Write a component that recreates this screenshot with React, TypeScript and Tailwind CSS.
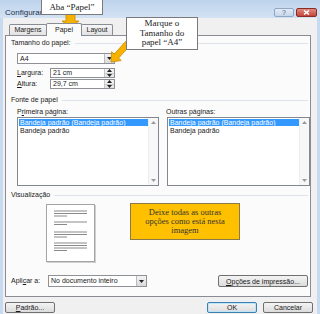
import React from 'react';

const DownCaret = () => (
  <svg width="5" height="3" viewBox="0 0 5 3">
    <polygon points="0,0 5,0 2.5,3" fill="#222" />
  </svg>
);

const UpCaret = ({ color = '#222' }: { color?: string }) => (
  <svg width="5" height="3" viewBox="0 0 5 3">
    <polygon points="0,3 5,3 2.5,0" fill={color} />
  </svg>
);

const GroupTitle = ({ text }: { text: string }) => (
  <div className="flex items-center gap-[4px] h-[8px] pl-[5px] pr-[2px]">
    <span className="leading-[8px] whitespace-nowrap">{text}</span>
    <div className="flex-1 h-px bg-[#dde3e8]" />
  </div>
);

const Select = ({ value, className }: { value: string; className: string }) => (
  <div className={`flex h-[11px] border border-[#8e9297] bg-white ${className}`}>
    <span className="flex-1 pl-[2px] leading-[9px]">{value}</span>
    <div className="w-[10px] flex items-center justify-center border-l border-[#b8bcc2] bg-linear-to-b from-[#f4f4f4] to-[#dadada]">
      <DownCaret />
    </div>
  </div>
);

const Spinner = ({ label, accel, value }: { label: string; accel: string; value: string }) => (
  <div className="flex items-center h-[10px] pl-[11px]">
    <span className="w-[33px] leading-[8px]">
      <span className="underline">{accel}</span>
      {label}
    </span>
    <div className="flex w-[65px] h-[10px] border border-[#8e9297] bg-white">
      <span className="flex-1 pl-[2px] leading-[8px]">{value}</span>
      <div className="w-[10px] flex flex-col border-l border-[#c4c8cc]">
        <div className="flex-1 flex items-center justify-center bg-[#f0f0f0] border-b border-[#c4c8cc]">
          <UpCaret />
        </div>
        <div className="flex-1 flex items-center justify-center bg-[#e6e6e6]">
          <DownCaret />
        </div>
      </div>
    </div>
  </div>
);

const ListBox = ({ className }: { className: string }) => (
  <div className={`flex h-[69px] border border-[#828790] bg-white ${className}`}>
    <div className="flex-1 flex flex-col pt-[1px] pl-[1px]">
      <div className="h-[7px] leading-[7px] pl-[1px] bg-[#3399ff] text-white whitespace-nowrap">
        Bandeja padrão (Bandeja padrão)
      </div>
      <div className="h-[7px] leading-[7px] pl-[1px] mt-[1px] whitespace-nowrap">Bandeja padrão</div>
    </div>
    <div className="w-[10px] flex flex-col justify-between items-center py-[3px] bg-[#f7f7f7] border-l border-[#eeeeee]">
      <UpCaret color="#9a9a9a" />
      <svg width="5" height="3" viewBox="0 0 5 3">
        <polygon points="0,0 5,0 2.5,3" fill="#9a9a9a" />
      </svg>
    </div>
  </div>
);

const Btn = ({ children, className }: { children: React.ReactNode; className: string }) => (
  <div
    className={`flex items-center justify-center h-[11px] border rounded-[2px] bg-linear-to-b from-[#f4f4f4] to-[#dcdcdc] leading-[9px] ${className}`}
  >
    {children}
  </div>
);

const PagePreview = () => {
  const lines: [number, boolean][] = [
    [6, true], [8.5, true], [11, false],
    [17, true], [19.5, false],
    [27, true], [29.5, true], [32, false],
    [38, true], [40.5, true], [43, true], [45.5, false],
  ];
  return (
    <div className="ml-[40px] w-[49px] h-[58px] bg-white border border-[#a4a4a4] shadow-[1px_1px_0_#cfcfcf]">
      <svg width="47" height="56" viewBox="0 0 47 56">
        {lines.map(([y, full], i) => (
          <line key={i} x1="7" x2={full ? 40 : 20} y1={y} y2={y} stroke="#8a8a8a" strokeWidth="1" />
        ))}
      </svg>
    </div>
  );
};

export default function App() {
  return (
    <div className="relative w-[320px] h-[314px] overflow-hidden flex flex-col bg-[#c8daef] text-[7px] text-[#1a1a1a] font-['Liberation_Sans',Arial,sans-serif]">
      {/* title bar */}
      <div className="h-[18px] flex items-start pl-[5px] bg-linear-to-b from-[#bdd3ec] to-[#d3e2f3]">
        <span className="mt-[9px] w-[36px] overflow-hidden whitespace-nowrap text-[8px] leading-[8px] text-[#1e3250]">
          Configurar página
        </span>
        <div className="ml-auto mt-[8px] mr-[3px] flex gap-[2px]">
          <div className="w-[20px] h-[9px] flex items-center justify-center rounded-[2px] border border-[#8fa7c5] bg-linear-to-b from-[#e3ecf7] to-[#c5d6eb] text-[7px] leading-[7px] text-[#4a5d78]">
            ?
          </div>
          <div className="w-[21px] h-[9px] flex items-center justify-center rounded-[2px] border border-[#8c2d26] bg-linear-to-b from-[#e08a80] to-[#c2433a]">
            <svg width="7" height="5" viewBox="0 0 7 5">
              <path d="M1 0.5 L6 4.5 M6 0.5 L1 4.5" stroke="#fff" strokeWidth="1.5" />
            </svg>
          </div>
        </div>
      </div>

      {/* dialog body */}
      <div className="flex-1 mx-[3px] flex flex-col bg-[#f0f0f0]">
        {/* tabs */}
        <div className="flex items-end h-[17px] pl-[6px]">
          <div className="w-[38px] h-[11px] flex items-center justify-center border border-b-0 border-[#898c95] rounded-t-[2px] bg-linear-to-b from-[#f6f6f6] to-[#e2e2e2] leading-[8px]">
            Margens
          </div>
          <div className="relative z-10 -ml-[1px] -mb-px w-[36px] h-[13px] flex items-center justify-center border border-b-0 border-[#898c95] rounded-t-[2px] bg-[#fbfbfb] leading-[8px]">
            Papel
          </div>
          <div className="-ml-[1px] w-[32px] h-[11px] flex items-center justify-center border border-b-0 border-[#898c95] rounded-t-[2px] bg-linear-to-b from-[#f6f6f6] to-[#e2e2e2] leading-[8px]">
            Layout
          </div>
        </div>

        {/* tab page */}
        <div className="ml-[2px] w-[306px] h-[262px] border border-[#898c95] bg-[#fbfbfb] flex flex-col pt-[3px]">
          <GroupTitle text="Tamanho do papel:" />
          <Select value="A4" className="mt-[6px] ml-[11px] w-[98px]" />
          <div className="mt-[4px]">
            <Spinner accel="L" label="argura:" value="21 cm" />
          </div>
          <div className="mt-[1px]">
            <Spinner accel="A" label="ltura:" value="29,7 cm" />
          </div>

          <div className="mt-[7px]">
            <GroupTitle text="Fonte de papel" />
          </div>
          <div className="mt-[4px] flex pl-[11px] h-[8px] leading-[8px]">
            <span className="w-[149px]">
              P<span className="underline">r</span>imeira página:
            </span>
            <span>Outras páginas:</span>
          </div>
          <div className="mt-[1px] flex pl-[11px] gap-[8px]">
            <ListBox className="w-[142px]" />
            <ListBox className="w-[143px]" />
          </div>

          <div className="mt-[5px]">
            <GroupTitle text="Visualização" />
          </div>
          <div className="mt-[5px]">
            <PagePreview />
          </div>

          <div className="mt-[13px] flex items-center h-[12px] pl-[5px] pr-[2px]">
            <span className="w-[37px] leading-[8px]">
              Apli<span className="underline">c</span>ar a:
            </span>
            <Select value="No documento inteiro" className="w-[99px] h-[12px]" />
            <Btn className="ml-auto w-[90px] h-[12px] border-[#707070]">
              <span>
                <span className="underline">O</span>pções de impressão...
              </span>
            </Btn>
          </div>
        </div>

        {/* bottom buttons */}
        <div className="flex mt-[5px] pl-[2px] pr-[4px]">
          <Btn className="w-[50px] border-[#707070]">
            <span>
              <span className="underline">P</span>adrão...
            </span>
          </Btn>
          <Btn className="ml-auto w-[50px] border-[#3c7fb1] shadow-[inset_0_0_0_1px_#bfe3f8]">OK</Btn>
          <Btn className="ml-[6px] w-[50px] border-[#707070]">Cancelar</Btn>
        </div>
      </div>

      {/* annotation arrows */}
      <svg className="absolute left-0 top-0 pointer-events-none" width="320" height="314" viewBox="0 0 320 314">
        <polygon
          points="66,14 75,14 75,21 79,21 70.5,28 62,21 66,21"
          fill="#f7b200"
          stroke="#c98a00"
          strokeWidth="0.8"
        />
        <polygon
          points="128.8,38 114.2,54.1 111.6,51.7 111,62 121.2,60.5 118.6,58.1 133.2,42"
          fill="#f7b200"
          stroke="#c98a00"
          strokeWidth="0.8"
        />
      </svg>

      {/* annotation boxes */}
      <div className="absolute left-[41px] -top-px w-[62px] h-[16px] flex items-center justify-center bg-white border border-[#7a7a7a] text-[9px] leading-[9px] text-[#222] font-['Liberation_Serif',serif]">
        Aba “Papel”
      </div>
      <div className="absolute left-[126px] top-[17px] w-[72px] h-[33px] flex items-center justify-center text-center bg-white border border-[#7a7a7a] text-[9px] leading-[9.5px] text-[#222] font-['Liberation_Serif',serif]">
        Marque o<br />Tamanho do<br />papel “A4”
      </div>
      <div className="absolute left-[130px] top-[203px] w-[110px] h-[37px] flex items-center justify-center text-center bg-[#ffc000] border border-[#8a7a4a] text-[8.5px] leading-[9px] text-[#333] font-['Liberation_Serif',serif]">
        Deixe todas as outras
        <br />
        opções como está nesta
        <br />
        imagem
      </div>
    </div>
  );
}
